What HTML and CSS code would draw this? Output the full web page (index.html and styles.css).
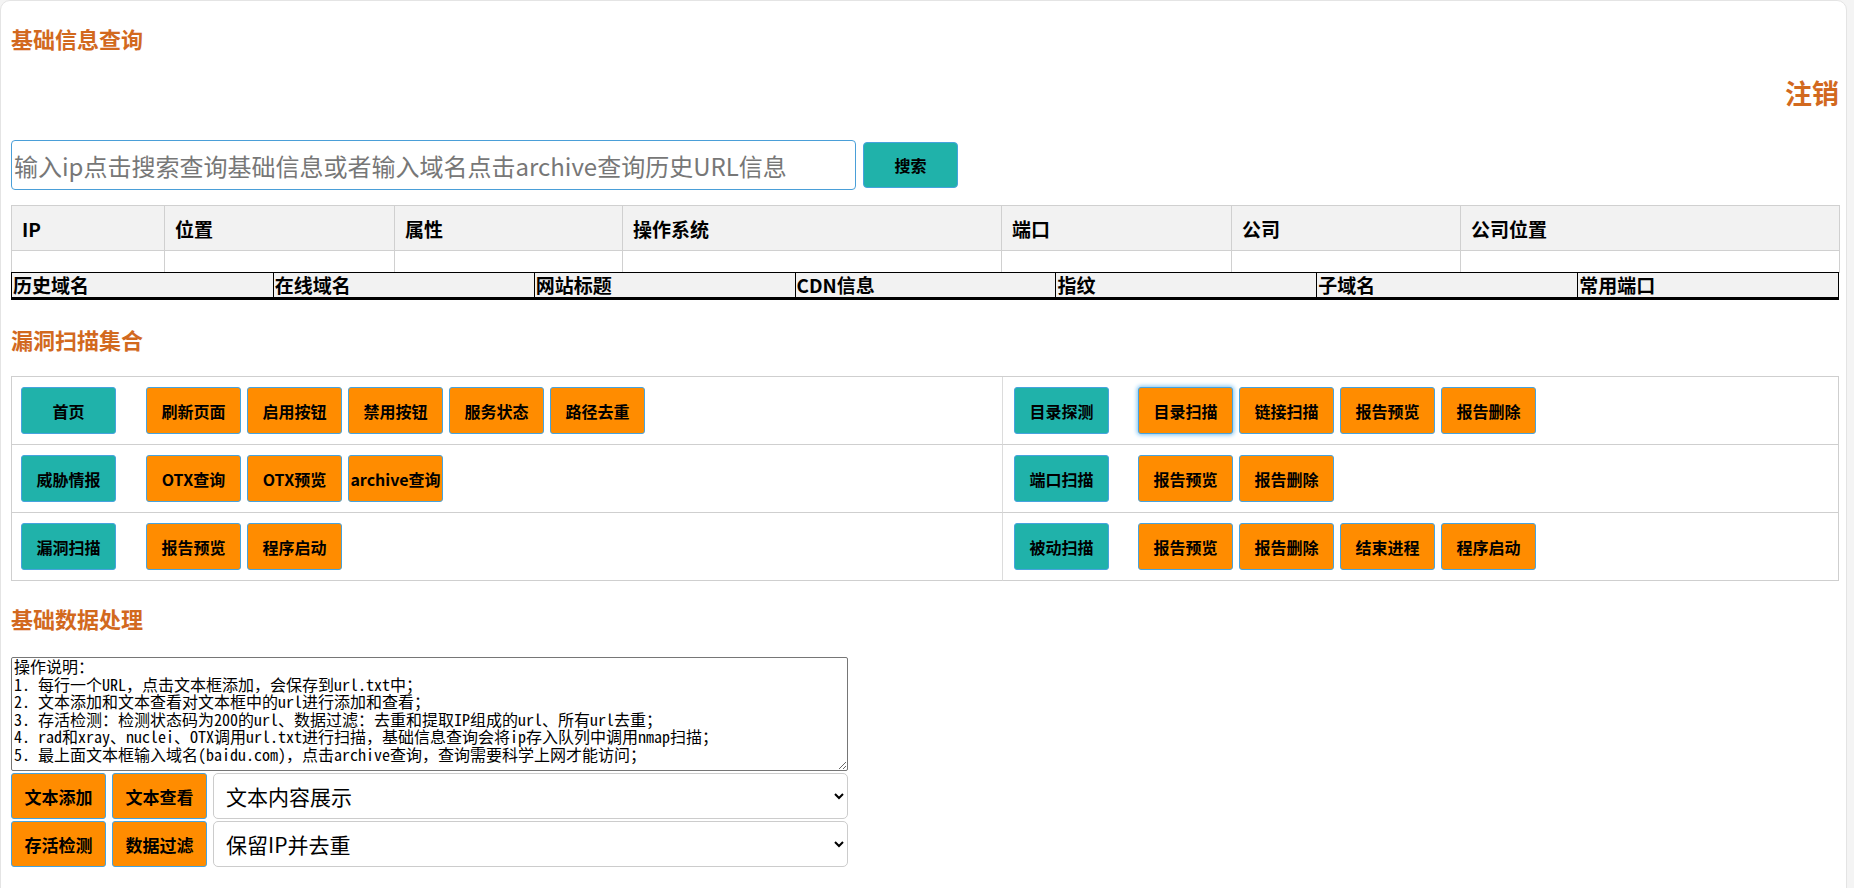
FILE: index.html
```html
<!DOCTYPE html>
<html lang="zh-CN">
<head>
<meta charset="utf-8">
<title>信息收集平台</title>
<link rel="stylesheet" href="styles.css">
</head>
<body>
<div class="card">
  <h2 class="title">基础信息查询</h2>
  <div class="logout-row"><a class="logout">注销</a></div>
  <div class="search-row">
    <input class="search-input" type="text" placeholder="输入ip点击搜索查询基础信息或者输入域名点击archive查询历史URL信息">
    <button class="btn teal search-btn">搜索</button>
  </div>

  <table class="info-table">
    <colgroup>
      <col class="c1"><col class="c2"><col class="c3"><col class="c4"><col class="c5"><col class="c6"><col class="c7">
    </colgroup>
    <thead>
      <tr><th>IP</th><th>位置</th><th>属性</th><th>操作系统</th><th>端口</th><th>公司</th><th>公司位置</th></tr>
    </thead>
    <tbody>
      <tr><td></td><td></td><td></td><td></td><td></td><td></td><td></td></tr>
    </tbody>
  </table>
  <div class="domain-bar">
    <div class="dcell">历史域名</div>
    <div class="dcell">在线域名</div>
    <div class="dcell">网站标题</div>
    <div class="dcell">CDN信息</div>
    <div class="dcell">指纹</div>
    <div class="dcell">子域名</div>
    <div class="dcell">常用端口</div>
  </div>

  <h2 class="title t2">漏洞扫描集合</h2>
  <div class="scan-grid">
    <div class="scell">
      <button class="btn teal">首页</button>
      <div class="group">
        <button class="btn orange">刷新页面</button>
        <button class="btn orange">启用按钮</button>
        <button class="btn orange">禁用按钮</button>
        <button class="btn orange">服务状态</button>
        <button class="btn orange">路径去重</button>
      </div>
    </div>
    <div class="scell right">
      <button class="btn teal">目录探测</button>
      <div class="group">
        <button class="btn orange focused">目录扫描</button>
        <button class="btn orange">链接扫描</button>
        <button class="btn orange">报告预览</button>
        <button class="btn orange">报告删除</button>
      </div>
    </div>
    <div class="scell">
      <button class="btn teal">威胁情报</button>
      <div class="group">
        <button class="btn orange">OTX查询</button>
        <button class="btn orange">OTX预览</button>
        <button class="btn orange">archive查询</button>
      </div>
    </div>
    <div class="scell right">
      <button class="btn teal">端口扫描</button>
      <div class="group">
        <button class="btn orange">报告预览</button>
        <button class="btn orange">报告删除</button>
      </div>
    </div>
    <div class="scell last">
      <button class="btn teal">漏洞扫描</button>
      <div class="group">
        <button class="btn orange">报告预览</button>
        <button class="btn orange">程序启动</button>
      </div>
    </div>
    <div class="scell right last">
      <button class="btn teal">被动扫描</button>
      <div class="group">
        <button class="btn orange">报告预览</button>
        <button class="btn orange">报告删除</button>
        <button class="btn orange">结束进程</button>
        <button class="btn orange">程序启动</button>
      </div>
    </div>
  </div>

  <h2 class="title t3">基础数据处理</h2>
  <textarea class="notes" spellcheck="false">操作说明：
1. 每行一个URL，点击文本框添加，会保存到url.txt中；
2. 文本添加和文本查看对文本框中的url进行添加和查看；
3. 存活检测：检测状态码为200的url、数据过滤：去重和提取IP组成的url、所有url去重；
4. rad和xray、nuclei、OTX调用url.txt进行扫描，基础信息查询会将ip存入队列中调用nmap扫描；
5. 最上面文本框输入域名(baidu.com)，点击archive查询，查询需要科学上网才能访问；</textarea>
  <div class="tool-row">
    <button class="btn orange">文本添加</button>
    <button class="btn orange">文本查看</button>
    <select class="picker">
      <option>文本内容展示</option>
    </select>
  </div>
  <div class="tool-row">
    <button class="btn orange">存活检测</button>
    <button class="btn orange">数据过滤</button>
    <select class="picker">
      <option>保留IP并去重</option>
    </select>
  </div>
</div>
</body>
</html>
```

FILE: styles.css
```css
* { box-sizing: border-box; }

html, body {
  margin: 0;
  padding: 0;
  background: #f4f4f4;
}

body {
  font-family: "Noto Sans CJK SC", "Noto Sans", sans-serif;
  color: #000;
}

.card {
  background: #fff;
  border: 1px solid #e4e4e4;
  border-radius: 10px;
  margin-right: 7px;
  padding: 22px 7px 30px 10px;
  min-height: 900px;
}

.title {
  margin: 0;
  font-size: 22px;
  line-height: 30px;
  font-weight: bold;
  color: #d2691e;
}

.logout-row {
  margin-top: 22px;
  text-align: right;
  line-height: 36px;
}

.logout {
  font-size: 27px;
  font-weight: bold;
  color: #d2691e;
  cursor: pointer;
}

.search-row {
  display: flex;
  align-items: center;
  gap: 7px;
  margin-top: 25px;
}

.search-input {
  width: 845px;
  height: 50px;
  border: 1px solid #4a9fd8;
  border-radius: 4px;
  padding: 0 2px;
  font-family: inherit;
  font-size: 24px;
  outline: none;
}

.search-input::placeholder {
  color: #777;
}

.btn {
  width: 95px;
  height: 47px;
  padding: 0;
  border: 1px solid #46a3de;
  border-radius: 3px;
  font-family: inherit;
  font-size: 16px;
  font-weight: bold;
  color: #000;
  white-space: nowrap;
  cursor: pointer;
}

.teal { background: #20b2aa; }
.orange { background: #ff8c00; }

.search-btn {
  height: 46px;
  border-radius: 4px;
}

.focused {
  box-shadow: 0 0 4px 1px #7cc2f2;
}

.info-table {
  width: 100%;
  margin-top: 15px;
  border-collapse: collapse;
  table-layout: fixed;
}

.c1 { width: 153px; }
.c2 { width: 230px; }
.c3 { width: 228px; }
.c4 { width: 379px; }
.c5 { width: 230px; }
.c6 { width: 229px; }
.c7 { width: 379px; }

.info-table th,
.info-table td {
  border: 1px solid #d0d0d0;
  text-align: left;
  padding: 0 10px;
}

.info-table th {
  height: 45px;
  background: #f2f2f2;
  font-size: 19px;
  font-weight: bold;
}

.info-table td {
  height: 22px;
}

.domain-bar {
  display: grid;
  grid-template-columns: repeat(7, 1fr);
  margin-top: -1px;
  background: #f2f2f2;
  border: 1px solid #000;
  border-bottom: 3px solid #000;
}

.dcell {
  font-size: 19px;
  font-weight: bold;
  line-height: 24px;
  padding-left: 1px;
  border-left: 1px solid #000;
}

.dcell:first-child { border-left: 0; }

.t2 { margin-top: 24px; }

.scan-grid {
  display: grid;
  grid-template-columns: 990px 1fr;
  margin-top: 22px;
  border: 1px solid #cfcfcf;
  border-bottom: 0;
}

.scell {
  display: flex;
  align-items: center;
  gap: 30px;
  padding: 10px 10px 10px 9px;
  border-bottom: 1px solid #cfcfcf;
}

.scell.right {
  border-left: 1px solid #dcdcdc;
  padding-left: 11px;
  gap: 29px;
}

.group {
  display: flex;
  gap: 6px;
}

.t3 { margin-top: 22px; }

.notes {
  display: block;
  width: 837px;
  height: 114px;
  margin-top: 24px;
  padding: 0 2px;
  border: 1px solid #767676;
  border-radius: 2px;
  font-family: "Noto Sans Mono CJK SC", "Liberation Mono", "Noto Sans CJK SC", monospace;
  font-size: 16px;
  line-height: 17.5px;
  color: #000;
  resize: both;
  overflow: hidden;
}

.tool-row {
  display: flex;
  gap: 6px;
  margin-top: 2px;
}

.tool-row .btn {
  height: 46px;
  width: 95px;
  font-size: 17px;
}

.picker {
  width: 635px;
  height: 46px;
  border: 1px solid #cccccc;
  border-radius: 5px;
  background-color: #fff;
  padding: 0 8px;
  font-family: inherit;
  font-size: 21px;
  color: #000;
}
```
